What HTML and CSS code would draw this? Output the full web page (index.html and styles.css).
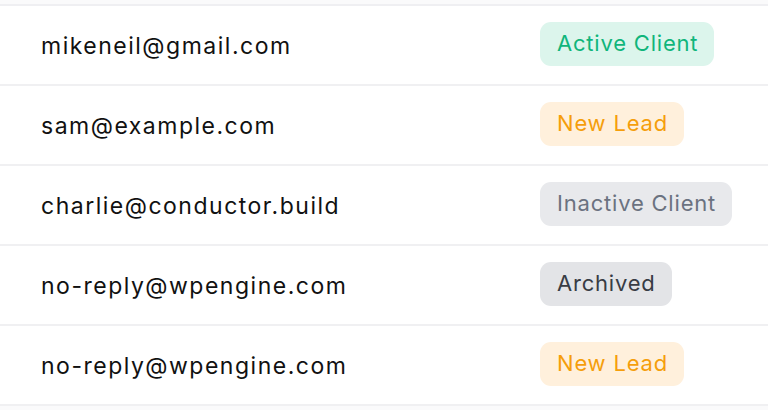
FILE: index.html
```html
<!DOCTYPE html>
<html>
<head>
<meta charset="utf-8">
<link rel="stylesheet" href="styles.css">
</head>
<body>
<div class="table">
  <div class="row"><div class="email">mikeneil@gmail.com</div><div class="status"><span class="badge active">Active Client</span></div></div>
  <div class="row"><div class="email">sam@example.com</div><div class="status"><span class="badge lead">New Lead</span></div></div>
  <div class="row"><div class="email">charlie@conductor.build</div><div class="status"><span class="badge inactive">Inactive Client</span></div></div>
  <div class="row"><div class="email">no-reply@wpengine.com</div><div class="status"><span class="badge archived">Archived</span></div></div>
  <div class="row"><div class="email">no-reply@wpengine.com</div><div class="status"><span class="badge lead">New Lead</span></div></div>
</div>
</body>
</html>
```
FILE: styles.css
```css
html, body { margin: 0; padding: 0; background: #fafafb; }
body { font-family: Inter, "Noto Sans", sans-serif; height: 410px; overflow: hidden; }
.table { margin-top: 4px; background: #fff; border-top: 2px solid #efeff2; }
.row { display: flex; align-items: center; height: 78px; border-bottom: 2px solid #f0f0f2; }
.email { width: 540px; padding-left: 41px; padding-top: 1px; box-sizing: border-box; font-size: 23px; letter-spacing: 1.5px; color: #111; }
.status { flex: 1; padding-bottom: 2px; }
.badge { display: inline-block; height: 44px; line-height: 43px; padding: 0 16px 0 17px; border-radius: 11px; font-size: 22px; letter-spacing: 0.8px; }
.active { background: #dcf5ec; color: #10b57b; }
.lead { background: #fff0dc; color: #f59e0b; }
.inactive { background: #e8e9ec; color: #6b7280; }
.archived { background: #e3e4e7; color: #383c44; }
```
